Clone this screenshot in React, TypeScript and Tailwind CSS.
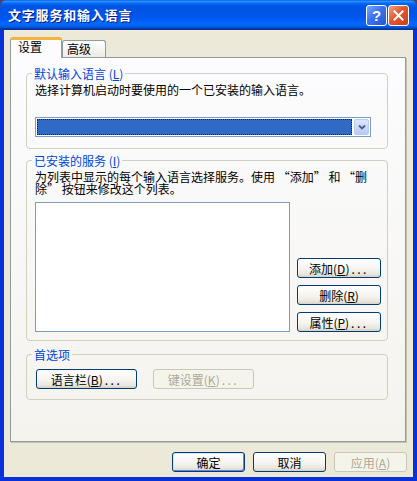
import React from 'react';

const btn =
  'h-[20px] rounded-[3px] border border-[#003c74] bg-[linear-gradient(180deg,#ffffff_0%,#f5f4f0_55%,#e8e6dc_85%,#d6d0c5_100%)] text-black flex items-center justify-center leading-[13px] whitespace-nowrap';
const btnOff =
  'h-[20px] rounded-[3px] border border-[#c9c7ba] bg-[#f5f4ea] text-[#aca899] flex items-center justify-center leading-[13px] whitespace-nowrap';
const group = 'border border-[#d0d0bf] rounded-[4px] w-[362px]';
const legend = '-ml-[3px] px-[2px] text-[#0046d5] leading-[13px]';

const Dots = () => <span className="tracking-[2.5px] ml-[2px]">...</span>;
// full-width quote marks like SimSun draws them
const Lq = () => <span className="inline-block w-[12px] text-right leading-[13px]">“</span>;
const Rq = () => <span className="inline-block w-[12px] text-left leading-[13px]">”</span>;

const App = () => {
  return (
    <div className="w-[417px] h-[481px] bg-[#4a3f7a] flex flex-col font-['Noto_Sans_CJK_SC','Noto_Sans',sans-serif] text-[12px] text-black">
      {/* title bar */}
      <div className="h-[30px] rounded-t-[7px] flex items-center pl-[8px] pr-[8px] bg-[linear-gradient(180deg,#0058ee_0%,#3593ff_4%,#288eff_6%,#127dff_8%,#036ffc_10%,#0262ee_14%,#0057e5_20%,#0054e3_24%,#0055eb_56%,#005bf5_66%,#026afe_76%,#0062ef_86%,#0052d6_92%,#0040ab_94%,#003092_100%)]">
        <span className="flex-1 text-white font-bold text-[13px] tracking-[0.8px] leading-[14px] [text-shadow:1px_1px_#0a1883]">
          文字服务和输入语言
        </span>
        <div className="flex gap-[1px]">
          <div className="w-[21px] h-[21px] rounded-[3px] border border-white bg-[linear-gradient(135deg,#7aa7fb_0%,#3c72ee_45%,#2456d8_100%)] flex items-center justify-center text-white font-bold text-[15px] leading-none font-['Liberation_Sans',sans-serif]">
            ?
          </div>
          <div className="w-[21px] h-[21px] rounded-[3px] border border-white bg-[linear-gradient(135deg,#f2a184_0%,#e2582e_45%,#c9401a_100%)] flex items-center justify-center">
            <svg width="11" height="11" viewBox="0 0 11 11">
              <path d="M1.5 1.5 L9.5 9.5 M9.5 1.5 L1.5 9.5" stroke="#fff" strokeWidth="2" strokeLinecap="square" />
            </svg>
          </div>
        </div>
      </div>

      {/* body */}
      <div className="flex-1 bg-[#ece9d8] border-x-4 border-b-4 border-[#0831d9] flex flex-col">
        <div className="pt-[7px] pl-[6px] flex items-end h-[27px]">
          <div className="relative z-10 -mb-px w-[52px] h-[21px] bg-[#fcfcfe] border-x border-[#919b9c] border-t-[3px] border-t-[#f4b33d] rounded-t-[3px] pl-[7px] leading-[13px]">
            设置
          </div>
          <div className="w-[44px] h-[17px] border border-b-0 border-[#919b9c] rounded-t-[3px] bg-[linear-gradient(180deg,#ffffff,#ecebe5)] pl-[4px] pt-[1px] leading-[13px]">
            高级
          </div>
        </div>

        <div className="ml-[6px] w-[396px] h-[385px] border border-[#919b9c] shadow-[1px_1px_0_0_#c5c2b2] bg-[linear-gradient(180deg,#fcfcfe,#f4f3ee)] pl-[15px] pt-[9px]">
          <fieldset className={`${group} pl-[8px] pb-[11px]`}>
            <legend className={legend}>
              默认输入语言 (<u>L</u>)
            </legend>
            <div className="mt-[4px] leading-[12px] whitespace-nowrap">选择计算机启动时要使用的一个已安装的输入语言。</div>
            <div className="mt-[21px] w-[336px] h-[20px] border border-[#7f9db9] bg-white p-[1px] flex">
              <div className="flex-1 bg-[#316ac5] border border-dotted border-[#10204a]" />
              <div className="ml-[2px] w-[15px] rounded-[2px] border border-[#b9cbf3] bg-[linear-gradient(180deg,#dce6fd,#b9cbf5)] flex items-center justify-center">
                <svg width="8" height="6" viewBox="0 0 8 6">
                  <path d="M1 1.5 L4 4.5 L7 1.5" fill="none" stroke="#4d6185" strokeWidth="1.8" />
                </svg>
              </div>
            </div>
          </fieldset>

          <fieldset className={`${group} mt-[5px] pl-[8px] pb-[8px]`}>
            <legend className={legend}>
              已安装的服务 (<u>I</u>)
            </legend>
            <div className="mt-[3px] flex flex-col">
              <div className="h-[12px] leading-[13px] whitespace-nowrap">
                为列表中显示的每个输入语言选择服务。使用 <Lq />添加<Rq /> 和 <Lq />删
              </div>
              <div className="h-[12px] leading-[13px] whitespace-nowrap">
                除<Rq /> 按钮来修改这个列表。
              </div>
            </div>
            <div className="mt-[8px] flex items-end gap-[7px]">
              <div className="w-[255px] h-[130px] border border-[#7f9db9] bg-white" />
              <div className="flex flex-col gap-[7px] w-[84px]">
                <div className={btn}>
                  添加(<u>D</u>)<Dots />
                </div>
                <div className={btn}>
                  删除(<u>R</u>)
                </div>
                <div className={btn}>
                  属性(<u>P</u>)<Dots />
                </div>
              </div>
            </div>
          </fieldset>

          <fieldset className={`${group} mt-[7px] pl-[9px] pb-[10px]`}>
            <legend className={`${legend} -ml-[4px]`}>首选项</legend>
            <div className="mt-[8px] flex gap-[16px]">
              <div className={`${btn} w-[101px]`}>
                语言栏(<u>B</u>)<Dots />
              </div>
              <div className={`${btnOff} w-[101px]`}>
                键设置(<u>K</u>)<Dots />
              </div>
            </div>
          </fieldset>
        </div>

        <div className="mt-[10px] pr-[6px] flex justify-end gap-[8px]">
          <div className={`${btn} w-[73px] shadow-[inset_1px_1px_0_#cee7ff,inset_-1px_-1px_0_#6982ee]`}>确定</div>
          <div className={`${btn} w-[73px]`}>取消</div>
          <div className={`${btnOff} w-[73px]`}>
            应用(<u>A</u>)
          </div>
        </div>
      </div>
    </div>
  );
};

export default App;
